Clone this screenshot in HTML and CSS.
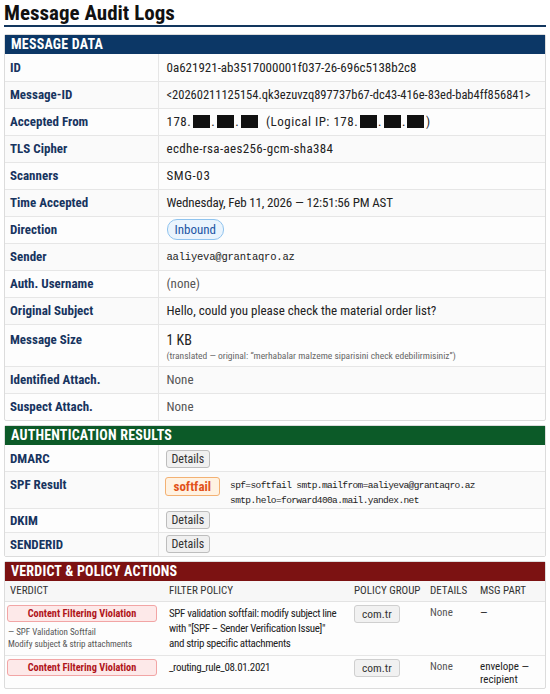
FILE: index.html
```html
<!DOCTYPE html>
<html lang="en">
<head>
    <meta charset="UTF-8">
    <title>Message Audit Logs</title>
    <meta name="viewport" content="width=device-width, initial-scale=1">
    <link rel="stylesheet" href="styles.css">
</head>
<body>
    <h1 class="page-title">Message Audit Logs</h1>

    <!-- Message data -->
    <section class="panel">
        <h2 class="panel-head head-blue">Message Data</h2>
        <table class="kv">
            <tr><th>ID</th><td>0a621921-ab3517000001f037-26-696c5138b2c8</td></tr>
            <tr><th>Message-ID</th><td class="narrow-id">&lt;20260211125154.qk3ezuvzq897737b67-dc43-416e-83ed-bab4ff856841&gt;</td></tr>
            <tr>
                <th>Accepted From</th>
                <td class="ip">178.<span class="redact"></span>.<span class="redact"></span>.<span class="redact"></span> &nbsp;(Logical IP: 178.<span class="redact"></span>.<span class="redact"></span>.<span class="redact"></span>)</td>
            </tr>
            <tr><th>TLS Cipher</th><td class="cipher">ecdhe-rsa-aes256-gcm-sha384</td></tr>
            <tr><th>Scanners</th><td class="scanner">SMG-03</td></tr>
            <tr><th>Time Accepted</th><td class="time">Wednesday, Feb 11, 2026 — 12:51:56 PM AST</td></tr>
            <tr><th>Direction</th><td><span class="pill">Inbound</span></td></tr>
            <tr><th>Sender</th><td class="mono">aaliyeva@grantaqro.az</td></tr>
            <tr><th>Auth. Username</th><td class="muted">(none)</td></tr>
            <tr><th>Original Subject</th><td>Hello, could you please check the material order list?</td></tr>
            <tr class="tall">
                <th>Message Size</th>
                <td>
                    <div class="size">1 KB</div>
                    <div class="note">(translated — original: “merhabalar malzeme siparisini check edebilirmisiniz”)</div>
                </td>
            </tr>
            <tr><th>Identified Attach.</th><td class="muted">None</td></tr>
            <tr><th>Suspect Attach.</th><td class="muted">None</td></tr>
        </table>
    </section>

    <!-- Authentication -->
    <section class="panel">
        <h2 class="panel-head head-green">Authentication Results</h2>
        <table class="kv auth">
            <tr class="dmarc"><th>DMARC</th><td><button class="btn-details">Details</button></td></tr>
            <tr class="spf">
                <th>SPF Result</th>
                <td>
                    <div class="spf-line">
                        <span class="badge-soft">softfail</span>
                        <span class="spf-text">spf=softfail smtp.mailfrom=aaliyeva@grantaqro.az<br>smtp.helo=forward400a.mail.yandex.net</span>
                    </div>
                </td>
            </tr>
            <tr><th>DKIM</th><td><button class="btn-details">Details</button></td></tr>
            <tr><th>SENDERID</th><td><button class="btn-details">Details</button></td></tr>
        </table>
    </section>

    <!-- Verdict -->
    <section class="panel">
        <h2 class="panel-head head-red">Verdict &amp; Policy Actions</h2>
        <table class="verdicts">
            <colgroup>
                <col class="c-verdict">
                <col class="c-policy">
                <col class="c-group">
                <col class="c-details">
                <col>
            </colgroup>
            <thead>
                <tr>
                    <th>Verdict</th>
                    <th>Filter Policy</th>
                    <th>Policy Group</th>
                    <th>Details</th>
                    <th>Msg Part</th>
                </tr>
            </thead>
            <tbody>
                <tr class="row-main">
                    <td>
                        <div class="violation">Content Filtering Violation</div>
                        <div class="sub first">— SPF Validation Softfail</div>
                        <div class="sub">Modify subject &amp; strip attachments</div>
                    </td>
                    <td class="policy">SPF validation softfail: modify subject line<br>with "[SPF – Sender Verification Issue]"<br>and strip specific attachments</td>
                    <td><span class="chip">com.tr</span></td>
                    <td class="muted small">None</td>
                    <td class="small">—</td>
                </tr>
                <tr class="row-route">
                    <td><div class="violation">Content Filtering Violation</div></td>
                    <td class="policy">_routing_rule_08.01.2021</td>
                    <td><span class="chip">com.tr</span></td>
                    <td class="muted small">None</td>
                    <td class="small part">envelope —<br>recipient</td>
                </tr>
            </tbody>
        </table>
    </section>
</body>
</html>
```

FILE: styles.css
```css
/* Base */
* {
    box-sizing: border-box;
    margin: 0;
    padding: 0;
}
body {
    margin: 0 4px;
    font-family: "Roboto Condensed", "Noto Sans", "Roboto", sans-serif;
    font-stretch: condensed;
    font-size: 13px;
    color: #222;
    background: #fff;
}

/* Title */
.page-title {
    font-size: 21px;
    font-weight: bold;
    color: #111;
    line-height: 24px;
    padding-top: 1px;
    border-bottom: 2px solid #12365e;
    margin-bottom: 7px;
}

/* Panels */
.panel {
    border: 1px solid #dcdcdc;
    border-radius: 2px;
    margin-bottom: 4px;
    background: #fdfdfd;
}
.panel-head {
    font-size: 14px;
    font-weight: bold;
    text-transform: uppercase;
    color: #fff;
    line-height: 19px;
    padding: 0 6px;
    letter-spacing: 0.2px;
}
.head-blue { background: #0c3766; }
.head-green { background: #0c5a28; }
.head-red { background: #7c1212; }

/* Key / value tables */
.kv {
    width: 100%;
    border-collapse: collapse;
}
.kv th,
.kv td {
    height: 27px;
    padding: 0 8px;
    text-align: left;
    vertical-align: middle;
    border-bottom: 1px solid #e6e6e6;
    white-space: nowrap;
}
.kv tr:last-child th,
.kv tr:last-child td {
    border-bottom: none;
}
.kv th {
    width: 153px;
    color: #17345f;
    font-weight: bold;
    font-size: 13px;
    border-right: 1px solid #e6e6e6;
    padding-left: 5px;
}
.kv tr:nth-child(even) { background: #fafafa; }
.kv .tall th,
.kv .tall td {
    height: 42px;
    vertical-align: top;
    padding-top: 7px;
    padding-bottom: 4px;
}
.size {
    font-size: 14px;
    line-height: 17px;
}
.note {
    font-size: 9.5px;
    color: #666;
    line-height: 13px;
}
.narrow-id { font-size: 12.5px; }
.cipher { letter-spacing: 0.35px; }
.scanner { letter-spacing: 0.6px; }
.time { letter-spacing: -0.15px; }
.mono {
    font-family: "Liberation Mono", "DejaVu Sans Mono", monospace;
    font-size: 10.5px;
    letter-spacing: -0.2px;
}
.muted { color: #555; }
.ip { letter-spacing: 0.5px; }
.redact {
    display: inline-block;
    width: 17px;
    height: 13px;
    margin: 0 1.5px;
    background: #111;
    vertical-align: -2px;
}
.pill {
    display: inline-block;
    padding: 1px 7px;
    font-size: 13px;
    color: #1b55a4;
    background: #eaf4fd;
    border: 1px solid #8fc3ee;
    border-radius: 10px;
    line-height: 17px;
}

/* Authentication rows */
.auth th,
.auth td {
    height: 24px;
}
.auth .dmarc th,
.auth .dmarc td {
    height: 26px;
    padding-top: 2px;
}
.auth .spf th,
.auth .spf td {
    height: 35px;
    vertical-align: top;
    padding-top: 5px;
}
.btn-details {
    font-family: inherit;
    font-stretch: inherit;
    font-size: 12px;
    color: #333;
    background: #f0f0f0;
    border: 1px solid #bdbdbd;
    border-radius: 3px;
    padding: 0 5px;
    height: 18px;
    line-height: 16px;
    margin-left: -1px;
}
.spf-line {
    display: flex;
    gap: 10px;
    align-items: flex-start;
}
.badge-soft {
    font-size: 13px;
    font-weight: bold;
    color: #e2531a;
    background: #fff2e2;
    border: 1px solid #f3b173;
    border-radius: 3px;
    padding: 0 8px;
    line-height: 17px;
    margin-left: -2px;
}
.spf-text {
    font-family: "Liberation Mono", "DejaVu Sans Mono", monospace;
    font-size: 9.5px;
    letter-spacing: -0.6px;
    line-height: 15px;
    color: #222;
    padding-top: 1px;
}

/* Verdict table */
.verdicts {
    width: 100%;
    border-collapse: collapse;
    table-layout: fixed;
}
.c-verdict { width: 159px; }
.c-policy { width: 185px; }
.c-group { width: 76px; }
.c-details { width: 50px; }
.verdicts th {
    text-align: left;
    font-size: 11px;
    font-weight: normal;
    text-transform: uppercase;
    color: #333;
    height: 20px;
    padding: 0 5px;
    background: #f7f7f7;
    border-bottom: 1px solid #e3e3e3;
    white-space: nowrap;
}
.verdicts td {
    vertical-align: top;
    padding: 3px 5px 0;
    border-bottom: 1px solid #e6e6e6;
    font-size: 11px;
}
.verdicts .row-main td { height: 54px; }
.verdicts .row-route td {
    height: 33px;
    border-bottom: none;
}
.violation {
    width: 150px;
    font-size: 10.3px;
    font-weight: bold;
    color: #b0141a;
    text-align: center;
    background: #fde9e9;
    border: 1px solid #f2a5a5;
    border-radius: 3px;
    line-height: 15px;
    margin-left: -3px;
    white-space: nowrap;
}
.sub {
    font-size: 9px;
    color: #555;
    line-height: 12px;
    margin-left: -2px;
    white-space: nowrap;
}
.sub.first { margin-top: 4px; }
.policy {
    font-size: 10px;
    letter-spacing: -0.35px;
    line-height: 15px;
    color: #222;
    white-space: nowrap;
}
.verdicts td.policy { padding-top: 4px; }
.chip {
    display: inline-block;
    font-size: 11.5px;
    color: #333;
    background: #f1f1f1;
    border: 1px solid #cfcfcf;
    border-radius: 3px;
    padding: 0 7px;
    line-height: 16px;
}
.small { font-size: 10px; }
.verdicts td.small { padding-top: 4px; line-height: 13px; }
```
